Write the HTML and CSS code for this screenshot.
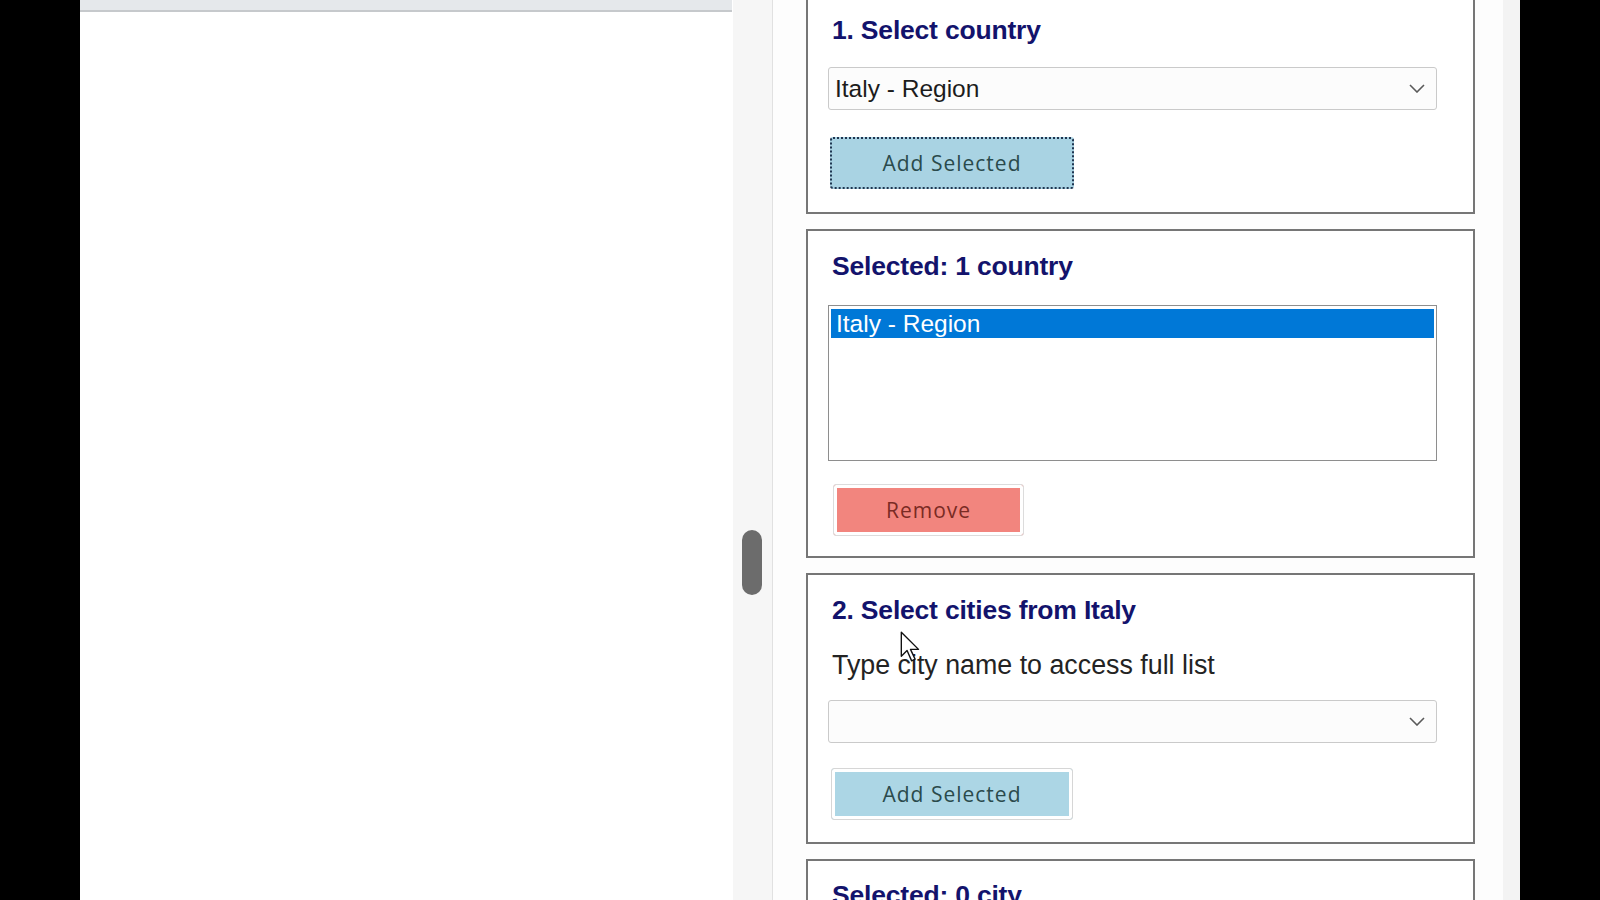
FILE: index.html
```html
<!DOCTYPE html>
<html>
<head>
<meta charset="utf-8">
<title>Select country</title>
<link rel="stylesheet" href="styles.css">
</head>
<body>
<div class="screen">
  <div class="bezel"></div>
  <div class="left-panel">
    <div class="topbar"></div>
  </div>
  <div class="track"><div class="thumb"></div></div>
  <div class="right-panel">
    <div class="cards">
      <section class="card card-1">
        <h2 class="heading">1. Select country</h2>
        <div class="combo combo-1">
          <span class="combo-text">Italy - Region</span>
          <svg class="chev" width="16" height="9" viewBox="0 0 16 9"><path d="M1 1 L8 8 L15 1" fill="none" stroke="#5a5a5a" stroke-width="1.6"/></svg>
        </div>
        <button class="btn btn-add btn-focus btn-1">Add Selected</button>
      </section>
      <section class="card card-2">
        <h2 class="heading">Selected: 1 country</h2>
        <div class="listbox">
          <div class="list-row selected">Italy - Region</div>
        </div>
        <button class="btn btn-remove">Remove</button>
      </section>
      <section class="card card-3">
        <h2 class="heading">2. Select cities from Italy</h2>
        <p class="label">Type city name to access full list</p>
        <div class="combo combo-2">
          <span class="combo-text"></span>
          <svg class="chev" width="16" height="9" viewBox="0 0 16 9"><path d="M1 1 L8 8 L15 1" fill="none" stroke="#5a5a5a" stroke-width="1.6"/></svg>
        </div>
        <button class="btn btn-add btn-2">Add Selected</button>
        <svg class="cursor" width="21" height="31" viewBox="0 0 18 27"><path d="M1 1 L1 22 L6 17 L10 26 L13 24.5 L9 16 L16 16 Z" fill="#ffffff" stroke="#111111" stroke-width="1.2" stroke-linejoin="round"/></svg>
      </section>
      <section class="card card-4">
        <h2 class="heading">Selected: 0 city</h2>
      </section>
    </div>
  </div>
  <div class="edge"></div>
  <div class="bezel"></div>
</div>
</body>
</html>
```
FILE: styles.css
```css
* { box-sizing: border-box; }
html, body {
  margin: 0;
  padding: 0;
  background: #000;
  width: 1600px;
  height: 900px;
  overflow: hidden;
  font-family: "Liberation Sans", Arial, sans-serif;
}
.screen {
  display: flex;
  width: 1600px;
  height: 900px;
}
.bezel {
  width: 80px;
  flex: none;
  background: #000;
}
.left-panel {
  width: 653px;
  flex: none;
  background: #ffffff;
}
.topbar {
  height: 12px;
  margin-right: 1px;
  background: #e5e8eb;
  border-bottom: 2px solid #c6c9cc;
}
.track {
  width: 40px;
  flex: none;
  background: #f6f6f6;
  border-right: 1px solid #e1e1e1;
  padding-top: 530px;
  padding-left: 9px;
}
.thumb {
  width: 20px;
  height: 65px;
  border-radius: 10px;
  background: #6c6c6c;
}
.right-panel {
  width: 730px;
  flex: none;
  background: #fdfdfd;
  padding-left: 33px;
  overflow: hidden;
}
.edge {
  width: 17px;
  flex: none;
  background: #f3f3f3;
}
.cards {
  width: 669px;
  margin-top: -7px;
  display: flex;
  flex-direction: column;
  gap: 15px;
}
.card {
  position: relative;
  background: #ffffff;
  border: 2px solid #767676;
  padding: 20px 36px 20px 20px;
  display: flex;
  flex-direction: column;
  align-items: flex-start;
}
.heading {
  margin: 0 0 0 4px;
  font-size: 26.5px;
  line-height: 30px;
  font-weight: bold;
  color: #13136c;
  letter-spacing: -0.2px;
}
.combo {
  width: 609px;
  height: 43px;
  border: 1px solid #cacaca;
  border-radius: 3px;
  background: #fcfcfc;
  display: flex;
  align-items: center;
  justify-content: space-between;
  padding: 0 11px 0 6px;
}
.combo-text {
  font-size: 24.5px;
  color: #1c1c1c;
}
.chev { display: block; }
.combo-1 { margin-top: 22px; }
.btn {
  font-family: "Open Sans", "Noto Sans", sans-serif;
  font-size: 21px;
  letter-spacing: 1px;
  border-radius: 3px;
  padding: 0;
  cursor: default;
}
.btn-add {
  width: 242px;
  height: 52px;
  color: #2a4a4c;
  background: #acd6e5;
  border: 1px solid #d6d6d6;
  box-shadow: inset 0 0 0 3px #ffffff;
}
.btn-focus {
  width: 244px;
  height: 52px;
  border: 2px dotted #1f3550;
  box-shadow: none;
  background: #a9d3e3;
}
.btn-1 { margin-top: 27px; margin-left: 2px; }
.card-1 { padding-bottom: 23px; }
.listbox {
  margin-top: 24px;
  width: 609px;
  height: 156px;
  border: 1px solid #8e8e8e;
  background: #ffffff;
  padding: 3px 2px;
}
.list-row {
  height: 29px;
  line-height: 29px;
  font-size: 24.5px;
  padding-left: 5px;
  color: #1c1c1c;
}
.list-row.selected {
  background: #0078d7;
  color: #ffffff;
}
.btn-remove {
  margin-top: 23px;
  margin-left: 5px;
  width: 191px;
  height: 52px;
  color: #7a2b24;
  background: #f2857e;
  border: 1px solid #dcdcdc;
  box-shadow: inset 0 0 0 3px #ffffff;
}
.card-2 { padding-bottom: 20px; }
.card-3 { padding-top: 20px; padding-bottom: 22px; }
.label {
  margin: 25px 0 0 4px;
  font-size: 26.8px;
  line-height: 30px;
  color: #232323;
}
.combo-2 { margin-top: 20px; }
.btn-2 { margin-top: 25px; margin-left: 3px; }
.cursor {
  position: absolute;
  left: 92px;
  top: 56px;
}
.card-4 { padding-top: 19px; height: 200px; }
```
